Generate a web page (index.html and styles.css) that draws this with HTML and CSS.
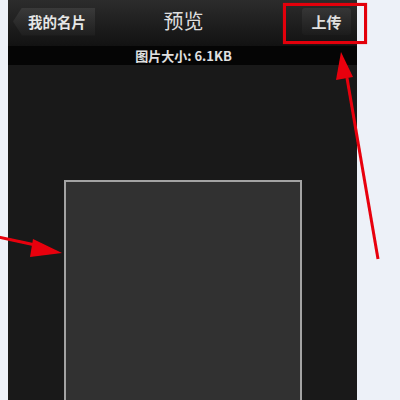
FILE: index.html
```html
<!DOCTYPE html>
<html>
<head>
<meta charset="utf-8">
<link rel="stylesheet" href="styles.css">
</head>
<body>
<div class="phone">
  <div class="navbar">
    <div class="back-btn"><span>我的名片</span></div>
    <div class="title">预览</div>
    <div class="upload-btn">上传</div>
  </div>
  <div class="infobar">图片大小: 6.1KB</div>
  <div class="content">
    <div class="preview"></div>
  </div>
</div>
<div class="highlight"></div>
<svg class="annot" width="400" height="400" viewBox="0 0 400 400">
  <defs>
    <filter id="blur" x="-20%" y="-20%" width="140%" height="140%">
      <feGaussianBlur stdDeviation="0.6"/>
    </filter>
  </defs>
  <g fill="#e8000b" stroke="#e8000b" filter="url(#blur)">
    <line x1="-2" y1="237" x2="40" y2="246" stroke-width="3"/>
    <polygon points="62,253 33,239 30,257" stroke="none"/>
    <line x1="378" y1="259" x2="347" y2="78" stroke-width="3"/>
    <polygon points="341,52 336,80 353,77" stroke="none"/>
  </g>
</svg>
</body>
</html>
```
FILE: styles.css
```css
html, body {
  margin: 0;
  padding: 0;
}
body {
  width: 400px;
  height: 400px;
  overflow: hidden;
  background: #edf1f8;
  font-family: "Noto Sans CJK SC", "Noto Sans", sans-serif;
  position: relative;
}
.phone {
  margin-left: 8px;
  width: 349px;
  height: 400px;
  background: #191919;
  display: flex;
  flex-direction: column;
}
.navbar {
  height: 46px;
  flex: none;
  background: linear-gradient(#2c2c2c, #121212);
  display: flex;
  align-items: center;
  justify-content: space-between;
  padding: 0 6px 0 5px;
  position: relative;
}
.back-btn {
  height: 28px;
  width: 82px;
  margin-top: -3px;
  background: linear-gradient(#3a3a3a, #1e1e1e);
  clip-path: polygon(0 50%, 9px 0, 100% 0, 100% 100%, 9px 100%);
  display: flex;
  align-items: center;
  justify-content: center;
  padding-left: 6px;
  box-sizing: border-box;
  color: #e6e6e6;
  font-size: 14.5px;
  font-weight: bold;
}
.title {
  position: absolute;
  left: 0;
  right: 0;
  top: 7px;
  text-align: center;
  font-size: 20px;
  color: #dedede;
  line-height: 28px;
  padding-left: 2px;
  pointer-events: none;
}
.upload-btn {
  width: 49px;
  height: 27px;
  margin-top: -3px;
  background: linear-gradient(#363636, #1c1c1c);
  border-radius: 3px;
  color: #e0e0e0;
  font-size: 15px;
  font-weight: bold;
  display: flex;
  align-items: center;
  justify-content: center;
}
.infobar {
  height: 19px;
  flex: none;
  background: #050505;
  color: #e0e0e0;
  font-size: 13px;
  font-weight: bold;
  text-align: center;
  line-height: 19px;
  padding-left: 2px;
}
.content {
  flex: 1;
  padding: 115px 0 0 56px;
}
.preview {
  width: 234px;
  height: 230px;
  background: #313131;
  border: 2px solid #a3a3a3;
}
.highlight {
  position: absolute;
  left: 283px;
  top: 3px;
  width: 78px;
  height: 35px;
  border: 3px solid #e3000b;
  box-shadow: 0 0 1px rgba(227,0,11,0.6);
}
.annot {
  position: absolute;
  left: 0;
  top: 0;
}
```
